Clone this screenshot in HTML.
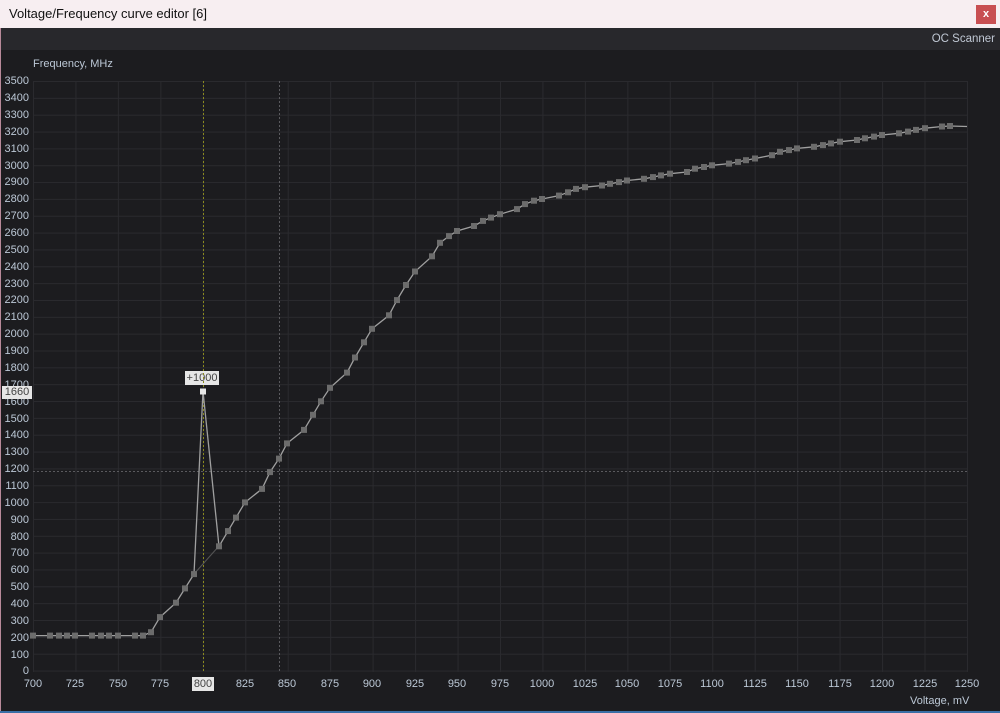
<!DOCTYPE html>
<html><head><meta charset="utf-8"><style>
*{margin:0;padding:0;box-sizing:border-box}
body{width:1000px;height:713px;overflow:hidden;background:#1c1c1f;font-family:"Liberation Sans",sans-serif;position:relative}
.title{position:absolute;left:0;top:0;width:1000px;height:28px;background:#f7eef1;color:#111;font-size:13px;line-height:27px;padding-left:9px}
.close{position:absolute;right:4px;top:5px;width:20px;height:19px;background:#c84f52;color:#fff;font-size:11px;font-weight:bold;text-align:center;line-height:18px}
.bar{position:absolute;left:1px;top:28px;width:999px;height:22px;background:#28282c}
.oc{position:absolute;right:5px;top:33px;color:#c0c8d4;font-size:11.5px}
.t{position:absolute;color:#bcc8d6;font-size:11px;line-height:12px}
.yl{position:absolute;right:971px;color:#bcc8d6;font-size:11px;line-height:12px;text-align:right}
.xl{position:absolute;top:678px;width:40px;margin-left:-20px;text-align:center;color:#bcc8d6;font-size:11px;line-height:12px}
.grid{position:absolute;left:33px;top:81px;width:935px;height:591px;
background-image:linear-gradient(to right,#2a2a2e 1px,transparent 1px),linear-gradient(to bottom,#2a2a2e 1px,transparent 1px);
background-size:42.4545px 100%,100% 16.857px}
</style></head><body>
<div class="title">Voltage/Frequency curve editor [6]</div>
<div class="close">x</div>
<div class="bar"></div>
<div class="oc">OC Scanner</div>
<div class="t" style="left:33px;top:58px">Frequency, MHz</div>
<div class="grid"></div>
<div class="yl" style="top:75px">3500</div><div class="yl" style="top:92px">3400</div><div class="yl" style="top:109px">3300</div><div class="yl" style="top:126px">3200</div><div class="yl" style="top:143px">3100</div><div class="yl" style="top:160px">3000</div><div class="yl" style="top:176px">2900</div><div class="yl" style="top:193px">2800</div><div class="yl" style="top:210px">2700</div><div class="yl" style="top:227px">2600</div><div class="yl" style="top:244px">2500</div><div class="yl" style="top:261px">2400</div><div class="yl" style="top:278px">2300</div><div class="yl" style="top:294px">2200</div><div class="yl" style="top:311px">2100</div><div class="yl" style="top:328px">2000</div><div class="yl" style="top:345px">1900</div><div class="yl" style="top:362px">1800</div><div class="yl" style="top:379px">1700</div><div class="yl" style="top:396px">1600</div><div class="yl" style="top:413px">1500</div><div class="yl" style="top:429px">1400</div><div class="yl" style="top:446px">1300</div><div class="yl" style="top:463px">1200</div><div class="yl" style="top:480px">1100</div><div class="yl" style="top:497px">1000</div><div class="yl" style="top:514px">900</div><div class="yl" style="top:531px">800</div><div class="yl" style="top:547px">700</div><div class="yl" style="top:564px">600</div><div class="yl" style="top:581px">500</div><div class="yl" style="top:598px">400</div><div class="yl" style="top:615px">300</div><div class="yl" style="top:632px">200</div><div class="yl" style="top:649px">100</div><div class="yl" style="top:665px">0</div>
<div class="xl" style="left:33px">700</div><div class="xl" style="left:75px">725</div><div class="xl" style="left:118px">750</div><div class="xl" style="left:160px">775</div><div class="xl" style="left:245px">825</div><div class="xl" style="left:287px">850</div><div class="xl" style="left:330px">875</div><div class="xl" style="left:372px">900</div><div class="xl" style="left:415px">925</div><div class="xl" style="left:457px">950</div><div class="xl" style="left:500px">975</div><div class="xl" style="left:542px">1000</div><div class="xl" style="left:585px">1025</div><div class="xl" style="left:627px">1050</div><div class="xl" style="left:670px">1075</div><div class="xl" style="left:712px">1100</div><div class="xl" style="left:755px">1125</div><div class="xl" style="left:797px">1150</div><div class="xl" style="left:840px">1175</div><div class="xl" style="left:882px">1200</div><div class="xl" style="left:925px">1225</div><div class="xl" style="left:967px">1250</div>
<div style="position:absolute;left:192px;top:677px;width:22px;height:14px;background:#e6e6e6;color:#444;font-size:11px;line-height:14px;text-align:center">800</div>
<div style="position:absolute;left:2px;top:386px;width:30px;height:13px;background:#e6e6e6;color:#444;font-size:11px;line-height:13px;text-align:center">1660</div>
<div style="position:absolute;left:185px;top:371px;width:34px;height:14px;background:#e6e6e6;color:#444;font-size:11px;line-height:14px;text-align:center">+1000</div>
<div class="t" style="left:910px;top:695px">Voltage, mV</div>
<svg style="position:absolute;left:0;top:0" width="1000" height="713">
<line x1="203.5" y1="81" x2="203.5" y2="671" stroke="#8a8a1e" stroke-dasharray="2,2"/>
<line x1="279.5" y1="81" x2="279.5" y2="671" stroke="#5a5a5e" stroke-dasharray="2,2"/>
<line x1="33" y1="471.5" x2="967" y2="471.5" stroke="#5a5a5e" stroke-dasharray="2,2"/>
<line x1="194" y1="574" x2="219" y2="546" stroke="#555" stroke-width="1"/>
<polyline fill="none" stroke="#a0a0a0" stroke-width="1.3" points="33,635.6 50,635.6 59,635.6 67,635.6 75,635.6 92,635.6 101,635.6 109,635.6 118,635.6 135,635.6 143,635.6 151,632.2 160,617.1 176,602.7 185,588.4 194,574.1 203,391.2 219,546.3 228,531.1 236,517.6 245,502.4 262,488.9 270,472.1 279,458.6 287,443.4 304,429.9 313,414.8 321,401.3 330,387.8 347,372.6 355,357.5 364,342.3 372,328.8 389,315.3 397,300.1 406,285 415,271.5 432,256.3 440,242.8 449,236.1 457,231 474,226 483,220.9 491,217.6 500,214.2 517,209.1 525,204.1 534,200.7 542,199 559,195.6 568,192.3 576,188.9 585,187.2 602,185.5 610,183.8 619,182.1 627,180.5 644,178.8 653,177.1 661,175.4 670,173.7 687,172 695,168.7 704,167 712,165.3 729,163.6 738,161.9 746,160.2 755,158.5 772,155.2 780,151.8 789,150.1 797,148.4 814,146.8 823,145.1 831,143.4 840,141.7 857,140 865,138.3 874,136.6 882,135 899,133.3 908,131.6 916,129.9 925,128.2 942,126.5 950,126 967,126.5"/>
<g fill="#6c6c6c">
<rect x="30" y="632.6" width="6" height="6"/><rect x="47" y="632.6" width="6" height="6"/><rect x="56" y="632.6" width="6" height="6"/><rect x="64" y="632.6" width="6" height="6"/><rect x="72" y="632.6" width="6" height="6"/><rect x="89" y="632.6" width="6" height="6"/><rect x="98" y="632.6" width="6" height="6"/><rect x="106" y="632.6" width="6" height="6"/><rect x="115" y="632.6" width="6" height="6"/><rect x="132" y="632.6" width="6" height="6"/><rect x="140" y="632.6" width="6" height="6"/><rect x="148" y="629.2" width="6" height="6"/><rect x="157" y="614.1" width="6" height="6"/><rect x="173" y="599.7" width="6" height="6"/><rect x="182" y="585.4" width="6" height="6"/><rect x="191" y="571.1" width="6" height="6"/><rect x="216" y="543.3" width="6" height="6"/><rect x="225" y="528.1" width="6" height="6"/><rect x="233" y="514.6" width="6" height="6"/><rect x="242" y="499.4" width="6" height="6"/><rect x="259" y="485.9" width="6" height="6"/><rect x="267" y="469.1" width="6" height="6"/><rect x="276" y="455.6" width="6" height="6"/><rect x="284" y="440.4" width="6" height="6"/><rect x="301" y="426.9" width="6" height="6"/><rect x="310" y="411.8" width="6" height="6"/><rect x="318" y="398.3" width="6" height="6"/><rect x="327" y="384.8" width="6" height="6"/><rect x="344" y="369.6" width="6" height="6"/><rect x="352" y="354.5" width="6" height="6"/><rect x="361" y="339.3" width="6" height="6"/><rect x="369" y="325.8" width="6" height="6"/><rect x="386" y="312.3" width="6" height="6"/><rect x="394" y="297.1" width="6" height="6"/><rect x="403" y="282" width="6" height="6"/><rect x="412" y="268.5" width="6" height="6"/><rect x="429" y="253.3" width="6" height="6"/><rect x="437" y="239.8" width="6" height="6"/><rect x="446" y="233.1" width="6" height="6"/><rect x="454" y="228" width="6" height="6"/><rect x="471" y="223" width="6" height="6"/><rect x="480" y="217.9" width="6" height="6"/><rect x="488" y="214.6" width="6" height="6"/><rect x="497" y="211.2" width="6" height="6"/><rect x="514" y="206.1" width="6" height="6"/><rect x="522" y="201.1" width="6" height="6"/><rect x="531" y="197.7" width="6" height="6"/><rect x="539" y="196" width="6" height="6"/><rect x="556" y="192.6" width="6" height="6"/><rect x="565" y="189.3" width="6" height="6"/><rect x="573" y="185.9" width="6" height="6"/><rect x="582" y="184.2" width="6" height="6"/><rect x="599" y="182.5" width="6" height="6"/><rect x="607" y="180.8" width="6" height="6"/><rect x="616" y="179.1" width="6" height="6"/><rect x="624" y="177.5" width="6" height="6"/><rect x="641" y="175.8" width="6" height="6"/><rect x="650" y="174.1" width="6" height="6"/><rect x="658" y="172.4" width="6" height="6"/><rect x="667" y="170.7" width="6" height="6"/><rect x="684" y="169" width="6" height="6"/><rect x="692" y="165.7" width="6" height="6"/><rect x="701" y="164" width="6" height="6"/><rect x="709" y="162.3" width="6" height="6"/><rect x="726" y="160.6" width="6" height="6"/><rect x="735" y="158.9" width="6" height="6"/><rect x="743" y="157.2" width="6" height="6"/><rect x="752" y="155.5" width="6" height="6"/><rect x="769" y="152.2" width="6" height="6"/><rect x="777" y="148.8" width="6" height="6"/><rect x="786" y="147.1" width="6" height="6"/><rect x="794" y="145.4" width="6" height="6"/><rect x="811" y="143.8" width="6" height="6"/><rect x="820" y="142.1" width="6" height="6"/><rect x="828" y="140.4" width="6" height="6"/><rect x="837" y="138.7" width="6" height="6"/><rect x="854" y="137" width="6" height="6"/><rect x="862" y="135.3" width="6" height="6"/><rect x="871" y="133.6" width="6" height="6"/><rect x="879" y="132" width="6" height="6"/><rect x="896" y="130.3" width="6" height="6"/><rect x="905" y="128.6" width="6" height="6"/><rect x="913" y="126.9" width="6" height="6"/><rect x="922" y="125.2" width="6" height="6"/><rect x="939" y="123.5" width="6" height="6"/><rect x="947" y="123" width="6" height="6"/>
</g>
<rect x="200" y="388.5" width="6" height="6" fill="#e6e6e6"/>
<rect x="0" y="28" width="1" height="685" fill="#b88a9a"/>
<rect x="0" y="711" width="1000" height="2" fill="#3a6ea5"/>
</svg>
</body></html>
